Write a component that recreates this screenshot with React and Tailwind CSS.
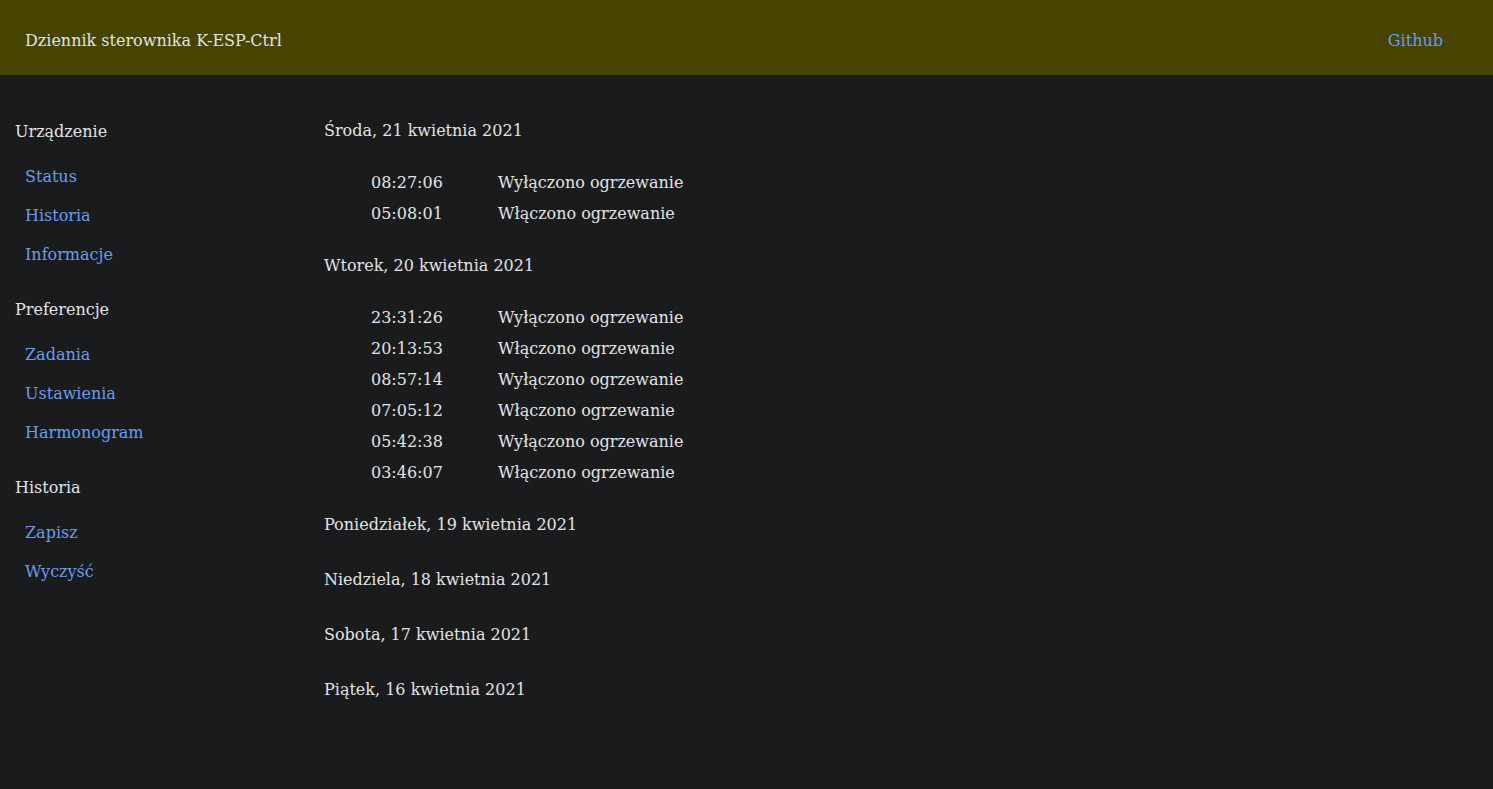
import React from "react";

const serif = { fontFamily: '"DejaVu Serif", serif' };

const sidebar = [
  { title: "Urządzenie", links: ["Status", "Historia", "Informacje"] },
  { title: "Preferencje", links: ["Zadania", "Ustawienia", "Harmonogram"] },
  { title: "Historia", links: ["Zapisz", "Wyczyść"] },
];

const days = [
  {
    title: "Środa, 21 kwietnia 2021",
    rows: [
      ["08:27:06", "Wyłączono ogrzewanie"],
      ["05:08:01", "Włączono ogrzewanie"],
    ],
  },
  {
    title: "Wtorek, 20 kwietnia 2021",
    rows: [
      ["23:31:26", "Wyłączono ogrzewanie"],
      ["20:13:53", "Włączono ogrzewanie"],
      ["08:57:14", "Wyłączono ogrzewanie"],
      ["07:05:12", "Włączono ogrzewanie"],
      ["05:42:38", "Wyłączono ogrzewanie"],
      ["03:46:07", "Włączono ogrzewanie"],
    ],
  },
  { title: "Poniedziałek, 19 kwietnia 2021", rows: [] },
  { title: "Niedziela, 18 kwietnia 2021", rows: [] },
  { title: "Sobota, 17 kwietnia 2021", rows: [] },
  { title: "Piątek, 16 kwietnia 2021", rows: [] },
];

export default function App() {
  return (
    <div
      className="min-h-[789px] bg-[#1a1b1d] text-[#e3e3e3] text-[16px]"
      style={serif}
    >
      <header className="h-[75px] bg-[#464400] flex items-center justify-between pl-[25px] pr-[50px]">
        <span className="leading-6 mt-[6px]">Dziennik sterownika K-ESP-Ctrl</span>
        <a className="text-[#6b9bef] leading-6 mt-[6px]">Github</a>
      </header>
      <div className="flex pt-[44px]">
        <nav className="w-[324px] shrink-0 pl-[15px] pt-[1px] flex flex-col">
          {sidebar.map((s) => (
            <div key={s.title} className="flex flex-col pb-[24px]">
              <div className="h-6 leading-6">{s.title}</div>
              <div className="flex flex-col pt-[13px] pl-[10px]">
                {s.links.map((l) => (
                  <a key={l} className="h-[39px] leading-[39px] text-[#6b9bef]">
                    {l}
                  </a>
                ))}
              </div>
            </div>
          ))}
        </nav>
        <main className="flex flex-col">
          {days.map((d) => (
            <section
              key={d.title}
              className={d.rows.length ? "" : "pb-[31px]"}
            >
              <div className="h-6 leading-6">{d.title}</div>
              {d.rows.length > 0 && (
                <div className="flex flex-col pt-[24px] pb-[25px] pl-[47px]">
                  {d.rows.map(([t, e], i) => (
                    <div key={i} className="flex h-[31px] items-center">
                      <span className="w-[127px]">{t}</span>
                      <span>{e}</span>
                    </div>
                  ))}
                </div>
              )}
            </section>
          ))}
        </main>
      </div>
    </div>
  );
}
